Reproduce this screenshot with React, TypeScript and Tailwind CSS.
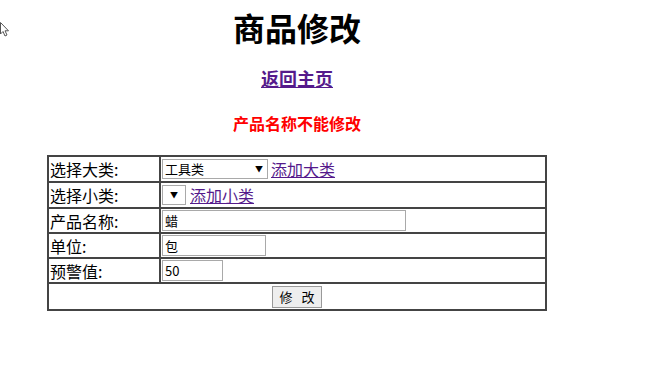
import React from "react";

const cell = "border border-[#444] px-[1px] align-middle";
const ctl = "border border-[#a9a9a9] bg-white text-[13px] leading-[16px] px-[2px] text-black";

const App: React.FC = () => {
  return (
    <div className="relative w-[645px] h-[368px] bg-white text-black font-['Noto_Sans_CJK_SC',sans-serif]">
      {/* mouse pointer left in the screenshot */}
      <svg className="absolute left-0 top-[22px]" width="10" height="16" viewBox="0 0 10 16">
        <path d="M0.5 0.5 L0.5 12 L3 9.5 L5 14 L7 13 L5 8.8 L8.5 8.8 Z" fill="white" stroke="#555" strokeWidth="1" />
      </svg>

      <div className="ml-[47px] w-[500px] flex flex-col items-center">
        <h1 className="mt-[7px] text-[32px] leading-[40px] font-bold">商品修改</h1>
        <a href="#" className="mt-[20px] text-[18px] leading-[22px] font-bold text-[#551a8b] underline">返回主页</a>
        <p className="mt-[23px] text-[16px] leading-[22px] font-bold text-[#ff0000]">产品名称不能修改</p>

        <table className="mt-[21px] w-[500px] border border-[#444] border-separate border-spacing-0 text-[16px] leading-[20px]">
          <tbody>
            <tr>
              <td className={`${cell} h-[26px] w-[112px]`}>选择大类:</td>
              <td className={`${cell} h-[26px]`}>
                <div className="flex items-center gap-[3px]">
                  <div className={`${ctl} w-[106px] h-[20px] flex items-center justify-between`}>
                    <span>工具类</span>
                    <span className="text-[8px] pr-[2px]">▼</span>
                  </div>
                  <a href="#" className="text-[#551a8b] underline">添加大类</a>
                </div>
              </td>
            </tr>
            <tr>
              <td className={`${cell} h-[26px]`}>选择小类:</td>
              <td className={`${cell} h-[26px]`}>
                <div className="flex items-center gap-[4px]">
                  <div className={`${ctl} w-[24px] h-[20px] flex items-center justify-center`}>
                    <span className="text-[8px]">▼</span>
                  </div>
                  <a href="#" className="text-[#551a8b] underline">添加小类</a>
                </div>
              </td>
            </tr>
            <tr>
              <td className={`${cell} h-[25px]`}>产品名称:</td>
              <td className={`${cell} h-[25px]`}>
                <div className={`${ctl} w-[244px] h-[21px] flex items-center`}>蜡</div>
              </td>
            </tr>
            <tr>
              <td className={`${cell} h-[25px]`}>单位:</td>
              <td className={`${cell} h-[25px]`}>
                <div className={`${ctl} w-[104px] h-[21px] flex items-center`}>包</div>
              </td>
            </tr>
            <tr>
              <td className={`${cell} h-[25px]`}>预警值:</td>
              <td className={`${cell} h-[25px]`}>
                <div className={`${ctl} w-[61px] h-[21px] flex items-center`}>50</div>
              </td>
            </tr>
            <tr>
              <td colSpan={2} className={`${cell} h-[27px] text-center`}>
                <button className="w-[50px] h-[22px] border border-[#999] bg-[#eee] text-[13px] leading-[16px] tracking-[3px] pl-[3px] align-middle">修 改</button>
              </td>
            </tr>
          </tbody>
        </table>
      </div>
    </div>
  );
};

export default App;
